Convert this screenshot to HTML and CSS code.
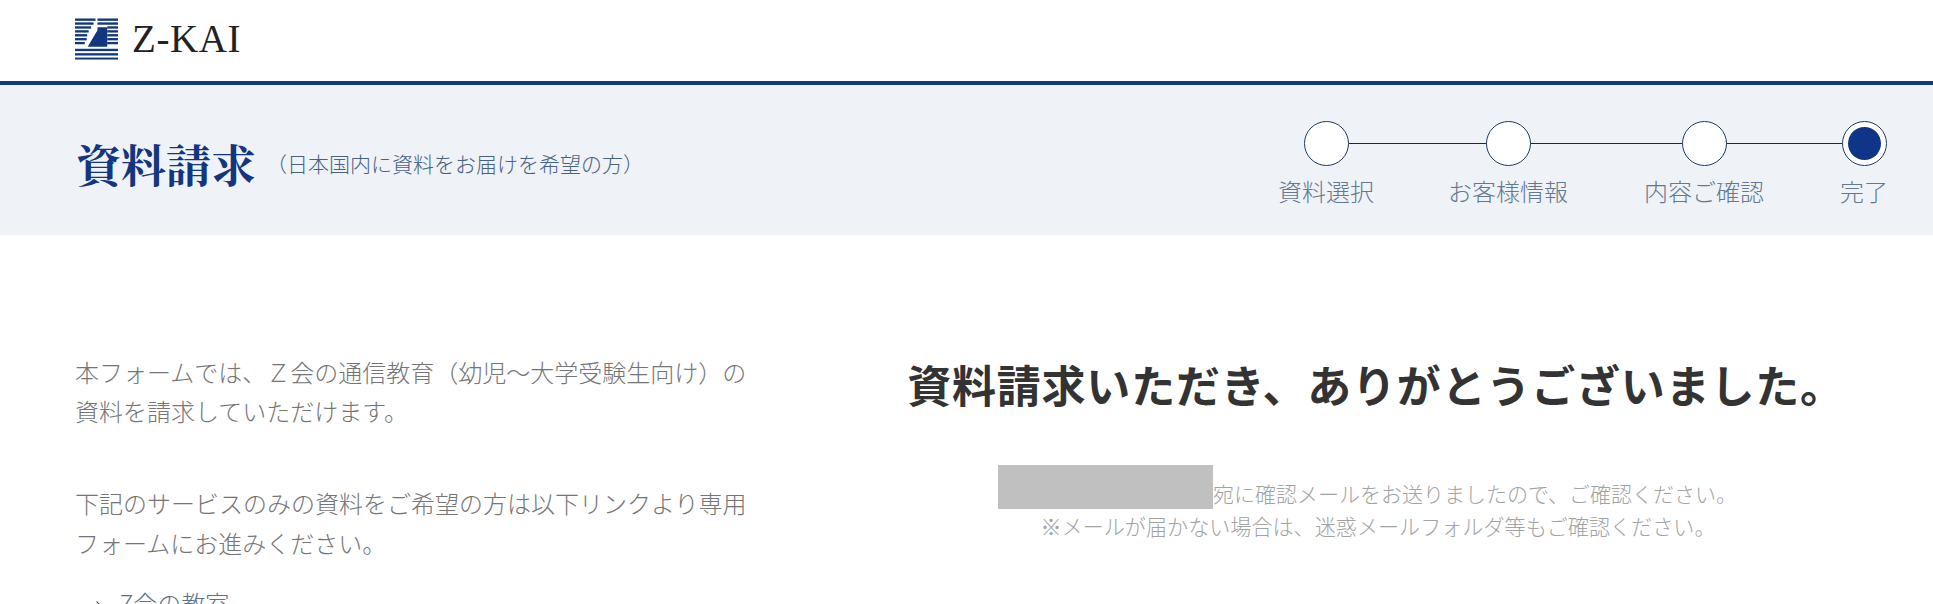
FILE: index.html
```html
<!DOCTYPE html>
<html lang="ja">
<head>
<meta charset="utf-8">
<title>資料請求</title>
<link rel="stylesheet" href="styles.css">
</head>
<body>
<header class="site-header">
  <a class="logo" href="#">
    <svg class="logo-mark" viewBox="0 0 44 42" aria-hidden="true">
      <g fill="#12367f">
        <rect x="0" y="0" width="21" height="2.400"/>
        <rect x="23" y="0" width="21" height="2.400"/>
        <rect x="0" y="4" width="19" height="2.400"/>
        <rect x="23" y="4" width="21" height="2.400"/>
        <rect x="0" y="8" width="16.500" height="2.400"/>
        <rect x="33" y="8" width="11" height="2.400"/>
        <rect x="0" y="12" width="14" height="2.400"/>
        <rect x="33" y="12" width="11" height="2.400"/>
        <rect x="0" y="16" width="12.500" height="2.400"/>
        <rect x="33" y="16" width="11" height="2.400"/>
        <rect x="0" y="20" width="12" height="2.400"/>
        <rect x="33" y="20" width="11" height="2.400"/>
        <rect x="0" y="24" width="10" height="2.400"/>
        <rect x="33" y="24" width="11" height="2.400"/>
        <rect x="0" y="31" width="44" height="2.400"/>
        <rect x="0" y="35.500" width="44" height="2.400"/>
        <rect x="0" y="40" width="44" height="2"/>
        <path d="M23 9h10v20H13l10-17z"/>
      </g>
    </svg>
    <span class="logo-text">Z-KAI</span>
  </a>
</header>
<section class="page-band">
  <div class="page-title">
    <h1>資料請求</h1>
    <p>（日本国内に資料をお届けを希望の方）</p>
  </div>
  <ol class="steps">
    <li class="step"><span class="dot"></span><span class="step-label">資料選択</span></li>
    <li class="step"><span class="dot"></span><span class="step-label">お客様情報</span></li>
    <li class="step"><span class="dot"></span><span class="step-label">内容ご確認</span></li>
    <li class="step current"><span class="dot"></span><span class="step-label">完了</span></li>
  </ol>
</section>
<main class="content">
  <div class="intro">
    <p>本フォームでは、Ｚ会の通信教育（幼児～大学受験生向け）の資料を請求していただけます。</p>
    <p>下記のサービスのみの資料をご希望の方は以下リンクより専用フォームにお進みください。</p>
    <ul class="links">
      <li>Z会の教室</li>
    </ul>
  </div>
  <div class="thanks">
    <h2>資料請求いただき、ありがとうございました。</h2>
    <p class="mail"><span class="redacted"></span>宛に確認メールをお送りましたので、ご確認ください。</p>
    <p class="note">※メールが届かない場合は、迷惑メールフォルダ等もご確認ください。</p>
  </div>
</main>
</body>
</html>
```

FILE: styles.css
```css
* { box-sizing: border-box; }
html, body { margin: 0; padding: 0; }
body {
  font-family: "Noto Sans CJK JP", "Noto Sans", sans-serif;
  font-weight: 300;
  color: #666;
  background: #fff;
  height: 604px;
  overflow: hidden;
}
.site-header {
  height: 85px;
  padding: 18px 75px 0;
  border-bottom: 4px solid #12367f;
}
.logo { display: flex; align-items: center; gap: 14px; text-decoration: none; }
.logo-mark { width: 43px; height: 42px; display: block; }
.logo-text {
  font-family: "Liberation Serif", serif;
  font-size: 39px;
  line-height: 42px;
  font-weight: 400;
  color: #222;
  letter-spacing: 0.6px;
}
.page-band {
  height: 150px;
  background: #eff3f8;
  padding: 0 45px 0 76px;
  display: flex;
  justify-content: space-between;
}
.page-title { display: flex; align-items: center; gap: 10px; height: 150px; margin-top: 3px; }
.page-title h1 {
  margin: 0;
  font-family: "Noto Serif CJK JP", "Liberation Serif", "Noto Sans CJK JP", serif;
  font-size: 45px;
  font-weight: 700;
  color: #12367f;
  line-height: 1;
}
.page-title p {
  margin: 0;
  font-size: 21px;
  color: #47627f;
}
.steps {
  list-style: none;
  margin: 0;
  padding: 36px 0 0;
  display: flex;
  gap: 76px;
}
.step {
  position: relative;
  display: flex;
  flex-direction: column;
  align-items: center;
}
.step:first-child { margin-right: -2px; }
.step + .step::before {
  content: "";
  position: absolute;
  top: 22px;
  right: 50%;
  width: 200px;
  height: 1px;
  background: #0f2a50;
}
.dot {
  position: relative;
  z-index: 1;
  width: 45px;
  height: 45px;
  border: 1px solid #1f3a5c;
  border-radius: 50%;
  background: #fff;
}
.current .dot::after {
  content: "";
  position: absolute;
  inset: 5px;
  border-radius: 50%;
  background: #0f3488;
}
.step-label {
  margin-top: 7px;
  font-size: 24px;
  line-height: 36px;
  color: #64798f;
  white-space: nowrap;
}
.content {
  display: grid;
  grid-template-columns: 672px 1fr;
  column-gap: 160px;
  padding: 117px 88px 0 75px;
}
.intro p {
  margin: 0 0 53px;
  font-size: 24px;
  line-height: 39.2px;
  color: #757575;
}
.links {
  list-style: none;
  margin: -32px 0 0;
  padding: 0 0 0 44px;
  font-size: 24px;
  line-height: 39.2px;
  color: #5a7288;
}
.links li { position: relative; }
.links li::before {
  content: "";
  position: absolute;
  left: -26px;
  top: 20px;
  width: 7px;
  height: 7px;
  border-top: 1px solid #333;
  border-right: 1px solid #333;
  transform: rotate(45deg);
}
.thanks { text-align: center; min-width: 0; }
.thanks h2 {
  margin: 0 -30px 49px;
  font-size: 44px;
  line-height: 64px;
  font-weight: 700;
  letter-spacing: 0.8px;
  color: #333;
  white-space: nowrap;
}
.thanks p {
  margin: 0;
  font-size: 21.1px;
  line-height: 33px;
  color: #a3a3a3;
  white-space: nowrap;
}
.thanks .mail { padding-right: 17px; font-size: 21px; }
.thanks .note { padding-left: 4px; }
.redacted {
  display: inline-block;
  width: 215px;
  height: 44px;
  background: #c0c0c0;
  vertical-align: -7.5px;
}
```
